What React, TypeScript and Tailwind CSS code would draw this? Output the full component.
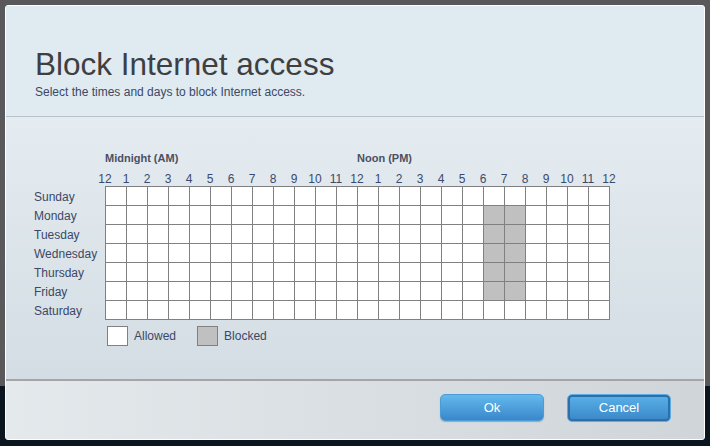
import React from "react";

const days = ["Sunday", "Monday", "Tuesday", "Wednesday", "Thursday", "Friday", "Saturday"];
const hours = ["12", "1", "2", "3", "4", "5", "6", "7", "8", "9", "10", "11", "12", "1", "2", "3", "4", "5", "6", "7", "8", "9", "10", "11", "12"];

function isBlocked(r: number, c: number) {
  return r >= 1 && r <= 5 && (c === 18 || c === 19);
}

export default function App() {
  return (
    <div
      className="relative w-[710px] h-[446px] overflow-hidden bg-[#0b1520]"
      style={{ fontFamily: '"Liberation Sans", Arial, sans-serif' }}
    >
      {/* background page behind dialog */}
      <div className="absolute left-0 top-0 w-[710px] h-[386px] bg-[#59595b]" />

      {/* dialog */}
      <div className="absolute left-[5px] top-[5px] w-[700px] h-[435px] rounded-[3px] border border-white bg-[#e0eaf1] flex flex-col overflow-hidden">
        {/* header */}
        <div className="h-[111px] border-b border-[#b9c2ca] bg-[#e0eaf1] pl-[29px] pt-[40px]">
          <div className="text-[31.5px] leading-[36px] text-[#3e3f42]">Block Internet access</div>
          <div className="text-[12px] leading-[14px] mt-[3px] text-[#3b4866]">Select the times and days to block Internet access.</div>
        </div>

        {/* body */}
        <div className="flex-1 bg-gradient-to-b from-[#e5ecf1] to-[#d3dde3] pl-[28px] pt-[33px]">
          <div className="relative h-[14px] text-[11px] font-bold text-[#4b5062]">
            <span className="absolute left-[71px] top-0">Midnight (AM)</span>
            <span className="absolute left-[323px] top-0">Noon (PM)</span>
          </div>
          <div className="relative h-[15px] mt-[7px]">
            {hours.map((h, i) => (
              <span
                key={i}
                className="absolute top-[1px] w-[24px] -ml-[12px] text-center text-[12px] leading-[14px] text-[#3a4a6c]"
                style={{ left: 71 + i * 21 }}
              >
                {h}
              </span>
            ))}
          </div>
          <div className="flex">
            <div className="w-[71px] flex flex-col pt-[1px]">
              {days.map((d) => (
                <div key={d} className="h-[19px] flex items-center text-[12px] text-[#3b4866]">
                  {d}
                </div>
              ))}
            </div>
            <div
              className="grid gap-px p-px bg-[#808080] w-[505px] h-[134px]"
              style={{ gridTemplateColumns: "repeat(24, 20px)", gridTemplateRows: "repeat(7, 18px)" }}
            >
              {days.map((d, r) =>
                hours.slice(0, 24).map((_, c) => (
                  <div key={d + c} className={isBlocked(r, c) ? "bg-[#c0c0c0]" : "bg-white"} />
                ))
              )}
            </div>
          </div>
          <div className="flex items-center mt-[6px] ml-[73px] text-[12px] text-[#3b4866]">
            <div className="w-[21px] h-[20px] border border-[#808080] bg-white" />
            <span className="ml-[6px]">Allowed</span>
            <div className="w-[21px] h-[20px] border border-[#808080] bg-[#c0c0c0] ml-[21px]" />
            <span className="ml-[6px]">Blocked</span>
          </div>
        </div>

        {/* footer */}
        <div className="h-[60px] border-t-2 border-[#a3a5a8] bg-gradient-to-r from-[#e4e9ec] to-[#cfd5d9] flex items-start justify-end pr-[33px] pt-[13px] gap-[23px]">
          <div className="w-[104px] h-[27px] rounded-[5px] bg-gradient-to-b from-[#63b9ec] to-[#3a87cb] border border-[#4a9cd8] shadow-[0_1px_1px_rgba(0,0,0,0.25)] flex items-center justify-center text-white text-[13px]">
            Ok
          </div>
          <div className="w-[104px] h-[28px] rounded-[5px] bg-gradient-to-b from-[#5ab2e8] to-[#3a86c8] border border-[#58ade6] shadow-[inset_0_0_0_2px_#2e6fa8] flex items-center justify-center text-white text-[13px]">
            Cancel
          </div>
        </div>
      </div>
    </div>
  );
}
